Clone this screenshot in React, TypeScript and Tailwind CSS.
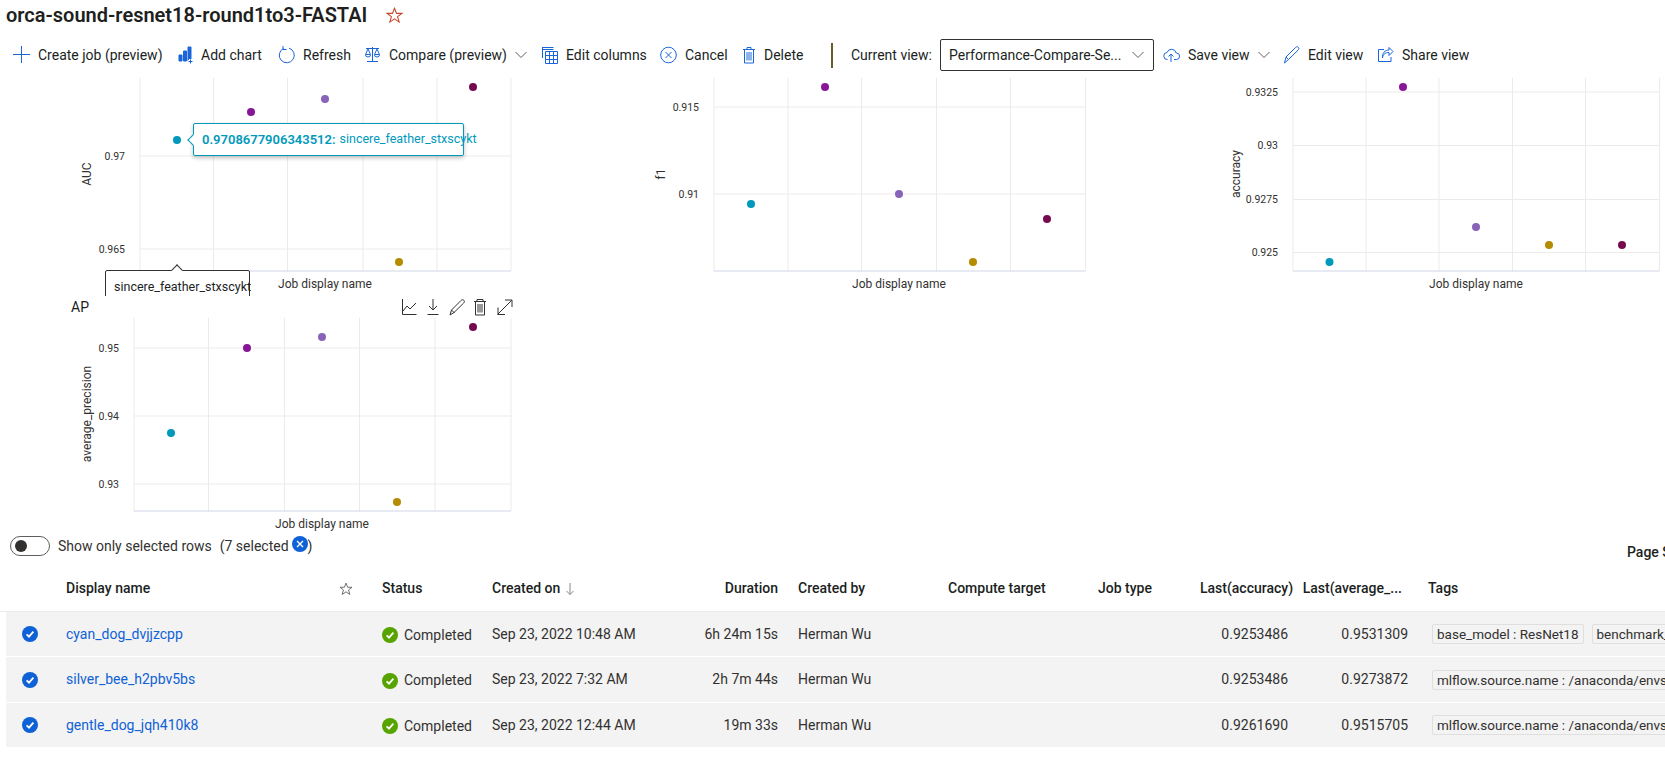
import React from "react";

const BLUE = "#1a66d9";

type Dot = [number, number];
const COLORS = ["#0099bc", "#881798", "#8764b8", "#b58b00", "#750b4e"];

function Chart(props: {
  w: number;
  left: number;
  right: number;
  vx: number[];
  ticks: [string, number][];
  dots: Dot[];
  yTitle: string;
  yX: number;
  xC: number;
}) {
  const { w, left, right, vx, ticks, dots, yTitle, yX, xC } = props;
  return (
    <svg width={w} height={218} className="shrink-0 block">
      {[left, ...vx, right].map((x) => (
        <line key={x} x1={x} x2={x} y1={0} y2={193} stroke="#edebe9" />
      ))}
      {ticks.map(([label, y]) => (
        <g key={label}>
          <line x1={left} x2={right} y1={y} y2={y} stroke="#edebe9" />
          <text x={left - 15} y={y + 3.5} textAnchor="end" fontSize="10.5" fill="#323130">
            {label}
          </text>
        </g>
      ))}
      <line x1={left} x2={right} y1={193} y2={193} stroke="#d0d6e6" />
      {dots.map(([x, y], i) => (
        <circle key={i} cx={x} cy={y} r={4} fill={COLORS[i]} />
      ))}
      <text x={xC} y={210} textAnchor="middle" fontSize="12" fill="#323130">
        Job display name
      </text>
      <text
        transform={`translate(${yX} 96) rotate(-90)`}
        textAnchor="middle"
        fontSize="12"
        fill="#323130"
      >
        {yTitle}
      </text>
    </svg>
  );
}

function Ico({ children, w = 17 }: { children: React.ReactNode; w?: number }) {
  return (
    <svg width={w} height={18} viewBox={`0 0 ${w} 18`} fill="none" stroke={BLUE} strokeWidth="1" className="shrink-0">
      {children}
    </svg>
  );
}

function Chevron() {
  return (
    <svg width="12" height="8" viewBox="0 0 12 8" fill="none" stroke="#605e5c" className="shrink-0">
      <path d="M.5 1 6 6.5 11.5 1" />
    </svg>
  );
}

function ToolItem({ icon, label, chevron, className }: { icon: React.ReactNode; label: string; chevron?: boolean; className: string }) {
  return (
    <div className={`flex items-center shrink-0 ${className}`}>
      {icon}
      <span className="ml-2 whitespace-nowrap">{label}</span>
      {chevron && <span className="ml-2 flex"><Chevron /></span>}
    </div>
  );
}

function CheckCircle({ color, size }: { color: string; size: number }) {
  return (
    <svg width={size} height={size} viewBox="0 0 16 16" className="shrink-0">
      <circle cx="8" cy="8" r="8" fill={color} />
      <path d="M4.6 8.3 7 10.6l4.4-5" fill="none" stroke="#fff" strokeWidth="1.8" />
    </svg>
  );
}

function StarIcon({ color, size }: { color: string; size: number }) {
  return (
    <svg width={size} height={size} viewBox="0 0 16 16" fill="none" stroke={color} className="shrink-0">
      <path d="M8 1.2 9.9 6h5l-4 3.1 1.5 5.1L8 11.2l-4.4 3 1.5-5.1-4-3.1h5z" />
    </svg>
  );
}

const rows = [
  { h: "h-[45px]", name: "cyan_dog_dvjjzcpp", created: "Sep 23, 2022 10:48 AM", dur: "6h 24m 15s", acc: "0.9253486", ap: "0.9531309", tags: ["base_model : ResNet18", "benchmark_name : orca"] },
  { h: "h-[46px]", name: "silver_bee_h2pbv5bs", created: "Sep 23, 2022 7:32 AM", dur: "2h 7m 44s", acc: "0.9253486", ap: "0.9273872", tags: ["mlflow.source.name : /anaconda/envs/azureml_py38/lib"] },
  { h: "h-[45px]", name: "gentle_dog_jqh410k8", created: "Sep 23, 2022 12:44 AM", dur: "19m 33s", acc: "0.9261690", ap: "0.9515705", tags: ["mlflow.source.name : /anaconda/envs/azureml_py38/lib"] },
];

const gridCols = "grid grid-cols-[60px_316px_110px_198px_88px_170px_150px_102px_88px_120px_257px] items-center";

export default function App() {
  return (
    <div className="w-[1665px] h-[760px] overflow-hidden bg-white text-[#201f1e] text-[14px] font-['Roboto',sans-serif]">
      <div className="h-[30px] pl-[6px] flex items-center">
        <span className="text-[20px] font-semibold text-[#201f1e]">orca-sound-resnet18-round1to3-FASTAI</span>
        <span className="ml-[19px] flex"><StarIcon color="#c8472c" size={17} /></span>
      </div>

      <div className="mt-[9px] h-[32px] pl-[13px] flex items-center">
        <ToolItem className="w-[165px]" label="Create job (preview)" icon={<Ico><path d="M8.5 0v17M0 8.5h17" /></Ico>} />
        <ToolItem className="w-[100px]" label="Add chart" icon={
          <Ico w={15}>
            <path d="M1 9h3v6H1zM5.5 5h3v10h-3zM10 1h3v14h-3z" fill={BLUE} />
            <path d="M12.5 13v5M10 15.500h5" stroke="#fff" strokeWidth="3" />
            <path d="M12.500 13.500v4M10.500 15.500h4" />
          </Ico>} />
        <ToolItem className="w-[86px]" label="Refresh" icon={<Ico><path d="M5.500 2.500a7.500 7.500 0 1 0 5.500-.4" /><path d="M5 0v3.500h3.500" /></Ico>} />
        <ToolItem className="w-[177px]" label="Compare (preview)" chevron icon={
          <Ico>
            <path d="M8.500 1v14M3 15.500h11M2 2.500h13M4 3 1.500 8.500h5zM13 3l-2.500 5.500h5zM1.500 9a2.500 2 0 0 0 5 0M10.500 9a2.500 2 0 0 0 5 0" />
          </Ico>} />
        <ToolItem className="w-[119px]" label="Edit columns" icon={
          <Ico>
            <path d="M1.500 1.500h11M1.500 3.500h11M1.500 1v11" />
            <path d="M4.500 5.500h12v12h-12zM4.500 9.500h12M4.500 13.500h12M8.500 5.500v12M12.500 5.500v12" />
          </Ico>} />
        <ToolItem className="w-[82px]" label="Cancel" icon={<Ico><circle cx="8.500" cy="9" r="7.800" /><path d="m5.500 6 6 6M11.500 6l-6 6" /></Ico>} />
        <ToolItem className="w-[89px]" label="Delete" icon={
          <Ico w={14}>
            <path d="M1 3.500h12M5 3.500V1.500h4v2M2.500 3.500v13.500h9V3.500M5 6v8.500M7 6v8.500M9 6v8.500" />
          </Ico>} />
        <div className="w-[2px] h-[25px] bg-[#6b5a2a] shrink-0" />
        <span className="ml-[18px] w-[89px] whitespace-nowrap">Current view:</span>
        <div className="w-[214px] h-[32px] border border-[#323130] rounded-[2px] flex items-center justify-between pl-[8px] pr-[9px]">
          <span className="whitespace-nowrap">Performance-Compare-Se...</span>
          <Chevron />
        </div>
        <ToolItem className="ml-[9px] w-[120px]" label="Save view" chevron icon={
          <Ico>
            <path d="M4.500 13.500a3.500 3.500 0 0 1-.5-7 4.800 4.800 0 0 1 9.200.5 3.200 3.200 0 0 1 .3 6.500H11" />
            <path d="M8 16V8M5.500 10.500 8 8l2.500 2.500" />
          </Ico>} />
        <ToolItem className="w-[94px]" label="Edit view" icon={
          <Ico><path d="M1.500 17 3 11 12.500 1.500c1-1 2-1 2.800-.2s.8 1.800-.2 2.800L5.500 13.500zM3 11l2.500 2.500" /></Ico>} />
        <ToolItem className="w-[92px]" label="Share view" icon={
          <Ico>
            <path d="M7 3.500H1.500v12H14V11" />
            <path d="M5.500 12c.5-4 3-5.500 6.500-5.500V9.500l4-4-4-4V4C8 4 5 7 5.500 12z" />
          </Ico>} />
      </div>

      <div className="relative mt-[7px] h-[218px] overflow-hidden flex">
        <Chart w={530} left={140} right={511} vx={[213.5, 287.5, 363, 437]} ticks={[["0.97", 78], ["0.965", 171]]}
          dots={[[177, 62], [251, 34], [325, 21], [399, 184], [473, 9]]} yTitle="AUC" yX={91} xC={325} />
        <Chart w={580} left={184} right={555.5} vx={[258, 331.5, 406.5, 480.5]} ticks={[["0.915", 29], ["0.91", 116]]}
          dots={[[221, 126], [295, 9], [369, 116], [443, 184], [517, 141]]} yTitle="f1" yX={135} xC={369} />
        <Chart w={555} left={183} right={549.5} vx={[256, 329, 402.5, 475.5]} ticks={[["0.9325", 14], ["0.93", 67.5], ["0.9275", 121.5], ["0.925", 174.5]]}
          dots={[[219.5, 184], [293, 9], [366, 149], [439, 167], [512, 167]]} yTitle="accuracy" yX={130} xC={366} />

        {/* hover callout on the first point */}
        <div className="absolute left-[193px] top-[45px] w-[271px] h-[33px] bg-white border border-[#0099bc] rounded-[2px] shadow-[0_2px_4px_rgba(0,0,0,0.25)] flex items-center pl-[8px] text-[13px] text-[#0099bc] whitespace-nowrap">
          <div className="absolute left-[-5px] top-[12px] w-[8px] h-[8px] bg-white border-l border-b border-[#0099bc] rotate-45" />
          <b className="font-semibold">0.9708677906343512:</b>
          <span className="ml-[4px] text-[12.500px]">sincere_feather_stxscykt</span>
        </div>
        <div className="absolute left-[105px] top-[192px] w-[145px] h-[40px] bg-white border border-[#323130] rounded-[2px] pl-[8px] pt-[7px] text-[12.500px] text-[#201f1e] whitespace-nowrap">
          <div className="absolute left-[67px] top-[-5px] w-[8px] h-[8px] bg-white border-l border-t border-[#323130] rotate-45" />
          sincere_feather_stxscykt
        </div>
      </div>

      <div className="h-[234px] w-[530px]">
        <div className="h-[22px] pl-[71px] flex items-center relative">
          <span className="text-[14px]">AP</span>
          <div className="absolute left-[402px] top-[2px] flex items-center text-[#323130]">
            <svg width="112" height="18" viewBox="0 0 112 18" fill="none" stroke="#323130">
              <path d="M.5 1v15.500h14M1 13l4-5 3 3 6-6" />
              <path d="M31 1v11M27 8l4 4 4-4M25.500 16.500h11" />
              <path d="M48 17l1.500-5L59 2.500c1-1 2-1 2.800-.2s.8 1.800-.2 2.800L52 14.500zM49.500 12l3 3" />
              <path d="M72 3.500h12M75 3.500V1.500h6v2M73.500 3.500V17h9V3.500M76 6v8.500M78 6v8.500M80 6v8.500" />
              <path d="M95.500 16.500l14-14M103 2h7v7M96 9.500v7h7" />
            </svg>
          </div>
        </div>
        <Chart w={530} left={134} right={511} vx={[208.5, 284.5, 359.5, 435]} ticks={[["0.95", 30], ["0.94", 98], ["0.93", 166]]}
          dots={[[171, 115], [247, 30], [322, 19], [397, 184], [473, 9]]} yTitle="average_precision" yX={91} xC={322} />
      </div>

      <div className="h-[36px] relative pl-[10px] flex items-start pt-[6px]">
        <div className="w-[40px] h-[20px] border border-[#605e5c] rounded-full flex items-center pl-[4px] shrink-0">
          <div className="w-[12px] h-[12px] rounded-full bg-[#323130]" />
        </div>
        <span className="ml-[8px] leading-[20px] whitespace-nowrap text-[#323130]">Show only selected rows</span>
        <span className="ml-[8px] leading-[20px] whitespace-nowrap text-[#323130]">(7 selected</span>
        <div className="w-[16px] h-[16px] rounded-full bg-[#0f62d6] flex items-center justify-center shrink-0 ml-[3px]">
          <svg width="8" height="8" viewBox="0 0 8 8" stroke="#fff" strokeWidth="1.300"><path d="m1 1 6 6M7 1 1 7" /></svg>
        </div>
        <span className="leading-[20px] text-[#323130]">)</span>
        <span className="absolute left-[1627px] top-[12px] leading-[20px] font-medium whitespace-nowrap">Page Size:</span>
      </div>

      <div className={`${gridCols} h-[46px] border-b border-[#edebe9] pl-[6px] font-medium text-[#201f1e]`}>
        <div />
        <div className="flex items-center justify-between pr-[29px]"><span>Display name</span><StarIcon color="#605e5c" size={14} /></div>
        <div>Status</div>
        <div className="flex items-center">
          <span>Created on</span>
          <svg width="10" height="14" viewBox="0 0 10 14" fill="none" stroke="#8a8886" className="ml-[5px]"><path d="M5 1v11.500M1.500 9 5 12.500 8.500 9" /></svg>
        </div>
        <div className="text-right">Duration</div>
        <div className="pl-[20px]">Created by</div>
        <div>Compute target</div>
        <div>Job type</div>
        <div className="col-span-1 text-right whitespace-nowrap">Last(accuracy)</div>
        <div className="text-right pr-[6px] whitespace-nowrap">Last(average_...</div>
        <div className="pl-[20px]">Tags</div>
      </div>

      {rows.map((r) => (
        <div key={r.name} className={`${gridCols} ${r.h} ml-[6px] bg-[#f3f3f3] border-b border-white text-[#323130]`}>
          <div className="pl-[16px]"><CheckCircle color="#0f62d6" size={16} /></div>
          <div className="text-[#0f62d6]">{r.name}</div>
          <div className="flex items-center pt-[2px]">
            <CheckCircle color="#57a300" size={16} />
            <span className="ml-[6px]">Completed</span>
          </div>
          <div className="whitespace-nowrap">{r.created}</div>
          <div className="text-right whitespace-nowrap">{r.dur}</div>
          <div className="pl-[20px]">Herman Wu</div>
          <div />
          <div />
          <div className="text-right">{r.acc}</div>
          <div className="text-right">{r.ap}</div>
          <div className="pl-[24px] flex gap-[8px] overflow-hidden">
            {r.tags.map((t) => (
              <span key={t} className="h-[20px] shrink-0 whitespace-nowrap bg-[#f3f3f3] border border-[#e1dfdd] rounded-[2px] px-[4px] leading-[19px] text-[13.500px]">{t}</span>
            ))}
          </div>
        </div>
      ))}
      <div className={`${gridCols} h-[45px] ml-[6px]`}>
        <div className="col-start-11 pl-[24px] overflow-hidden">
          <span className="inline-block h-[20px] whitespace-nowrap border border-[#e1dfdd] rounded-[2px] px-[4px] text-[13.500px] text-[#323130]">mlflow.source.name : /anaconda/envs/azureml_py38/lib</span>
        </div>
      </div>
    </div>
  );
}
